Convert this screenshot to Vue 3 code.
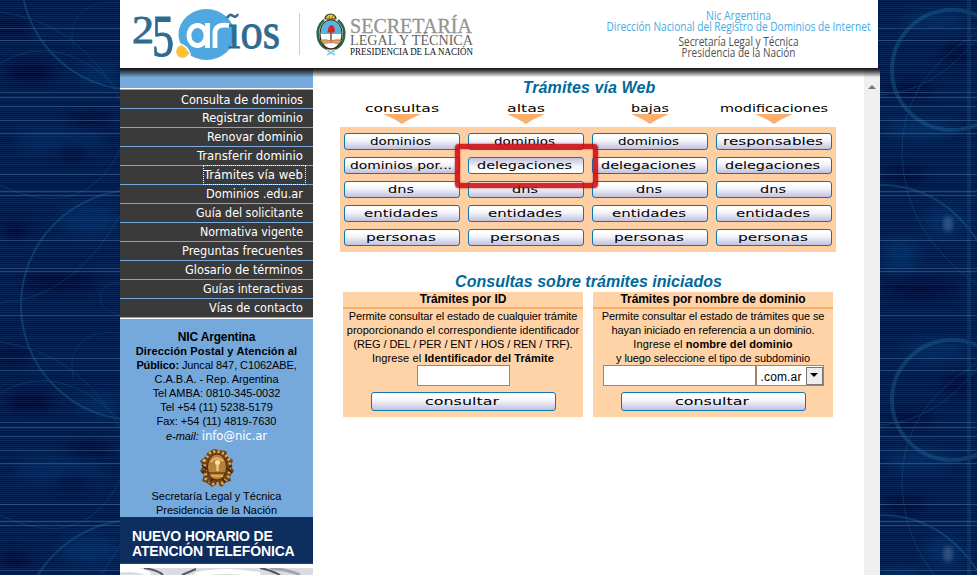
<script setup>
const menu = [
  'Consulta de dominios', 'Registrar dominio', 'Renovar dominio', 'Transferir dominio',
  'Trámites vía web', 'Dominios .edu.ar', 'Guía del solicitante', 'Normativa vigente',
  'Preguntas frecuentes', 'Glosario de términos', 'Guías interactivas', 'Vías de contacto',
]
const menuWidths = [122, 101, 96, 106, 99, 97, 107, 103, 121, 118, 100, 94]

// Label widths of the extended display lettering, in pixels
const widths = {
  consultas: 74, altas: 38, bajas: 38, modificaciones: 108, dominios: 61,
  'dominios por...': 102, dns: 26, entidades: 74, personas: 70,
  delegaciones: 95, responsables: 100, consultar: 74,
}
const columns = [
  { name: 'consultas', items: ['dominios', 'dominios por...', 'dns', 'entidades', 'personas'] },
  { name: 'altas', items: ['dominios', 'delegaciones', 'dns', 'entidades', 'personas'] },
  { name: 'bajas', items: ['dominios', 'delegaciones', 'dns', 'entidades', 'personas'] },
  { name: 'modificaciones', items: ['responsables', 'delegaciones', 'dns', 'entidades', 'personas'] },
]
const lines = []
for (let y = 0; y < 330; y += 2) {
  lines.push({ y, o: 0.1 + ((y * 37) % 23) / 130 })
}
const brightLines = [28, 40, 92, 97, 106, 120, 133, 174, 191, 195, 240, 268, 271, 315]
</script>

<template>
  <div class="page">
    <svg class="backdrop" width="977" height="575">
      <defs>
        <filter id="soft"><feGaussianBlur stdDeviation="7" /></filter>
        <filter id="haze"><feGaussianBlur stdDeviation="2" /></filter>
        <pattern id="tile" width="977" height="330" patternUnits="userSpaceOnUse">
          <rect width="977" height="330" fill="#001848" />
          <g filter="url(#soft)" fill="#000628" opacity=".8">
            <ellipse cx="30" cy="72" rx="26" ry="10" /><ellipse cx="12" cy="28" rx="20" ry="8" />
            <ellipse cx="72" cy="150" rx="16" ry="9" /><ellipse cx="15" cy="230" rx="14" ry="9" />
            <ellipse cx="90" cy="120" rx="25" ry="7" /><ellipse cx="60" cy="282" rx="40" ry="8" />
            <ellipse cx="958" cy="54" rx="16" ry="9" /><ellipse cx="910" cy="90" rx="25" ry="7" />
            <ellipse cx="905" cy="175" rx="22" ry="7" /><ellipse cx="920" cy="290" rx="40" ry="8" />
          </g>
          <g filter="url(#soft)" fill="#033a78" opacity=".5">
            <ellipse cx="60" cy="140" rx="45" ry="8" /><ellipse cx="90" cy="220" rx="30" ry="14" />
            <ellipse cx="100" cy="75" rx="20" ry="8" /><ellipse cx="920" cy="130" rx="35" ry="9" />
            <ellipse cx="945" cy="222" rx="20" ry="14" /><ellipse cx="900" cy="255" rx="18" ry="16" />
            <ellipse cx="935" cy="20" rx="30" ry="8" />
          </g>
          <rect v-for="l in lines" :key="l.y" x="0" :y="l.y" width="977" height="1" fill="#2c5f98" :opacity="l.o" />
          <rect v-for="y in brightLines" :key="'b' + y" x="0" :y="y" width="977" height="1" fill="#5f86b4" opacity=".4" />
          <g fill="none" stroke="#1c6c94" opacity=".38">
            <circle cx="136" cy="305" r="115" stroke-width="2" />
            <circle cx="136" cy="-25" r="115" stroke-width="2" />
            <path d="M0 12Q80 22 122 102M0 63Q60 28 122 92M0 185Q85 225 122 146M0 303Q75 298 122 212" opacity=".7" />
            <path d="M120 3C85 -2 65 20 74 50M122 282Q100 283 100 298Q101 312 122 315" opacity=".5" />
            <circle cx="952" cy="70" r="60" stroke-width="4" />
            <path d="M977 33Q900 80 902 155Q905 235 977 284M880 95Q935 92 977 38" opacity=".8" />
            <path d="M880 185Q940 185 977 240" stroke-width="2" />
            <path d="M969 0V330" stroke-width="4" opacity=".6" />
          </g>
          <ellipse cx="948" cy="224" rx="5" ry="8" fill="#8291ae" opacity=".35" filter="url(#haze)" />
        </pattern>
      </defs>
      <rect width="977" height="575" fill="url(#tile)" />
    </svg>

    <div class="site">
      <header class="header">
        <svg class="brand" width="370" height="68" viewBox="120 0 370 68">
          <g class="serif" fill="#2f6b90" stroke="#2f6b90" stroke-width=".9">
            <text x="132" y="43" font-size="40" textLength="22" lengthAdjust="spacingAndGlyphs">2</text>
            <text x="152" y="56" font-size="59" textLength="22" lengthAdjust="spacingAndGlyphs">5</text>
            <ellipse cx="206.500" cy="34.500" rx="28" ry="25.500" fill="#4fa8df" stroke="none" />
            <text x="228" y="48" font-size="51" textLength="52" lengthAdjust="spacingAndGlyphs">ıos</text>
            <path d="M227 18Q230 13 233 16Q236 18 238 14" fill="none" stroke-width="2.500" />
          </g>
          <g fill="none" stroke="#fff" stroke-width="4.800">
            <ellipse cx="197.500" cy="35.500" rx="8.500" ry="10" />
            <path d="M207.500 23V48M215 48V32Q216 23.500 229 25.500" />
          </g>
          <circle cx="182.500" cy="51.500" r="6.300" fill="#fdc131" />
          <path d="M179 43.500Q188 46 190.500 55" fill="none" stroke="#fff" stroke-width="1.400" />
          <path d="M299.500 13V55" stroke="#ccc" />
          <g>
            <path d="M324 20Q316 27 318 37Q319 45 327 49M338 20Q346 27 344 37Q343 45 335 49" fill="none" stroke="#25684a" stroke-width="2.500" />
            <path d="M325 19a5.500 5 0 0 1 11 0z" fill="#f0c238" stroke="#3b3520" stroke-width="1.200" />
            <path d="M329 17h1M332 17h1" stroke="#5b4416" />
            <ellipse cx="331" cy="34.500" rx="11" ry="14.500" fill="#fff" stroke="#3c2a16" stroke-width="1.300" />
            <path d="M320.700 34Q321 21 331 20.500Q341 21 341.300 34Z" fill="#55b5df" />
            <path d="M331 31V43" stroke="#86502c" stroke-width="1.500" />
            <path d="M327.500 32.500Q328 25 332 25Q336 28 334.500 32.500Z" fill="#d8232d" />
            <path d="M320.500 40Q327 39 331 41Q335 39 341.500 40L339 44Q331 41 323 44Z" fill="#dfa065" stroke="#82512e" stroke-width=".5" />
            <path d="M327 50L335 55M335 50L327 55" stroke="#8bcbe9" stroke-width="2" />
          </g>
          <g class="serif">
            <text x="350" y="33" font-size="20.500" fill="#949494" stroke="#949494" stroke-width=".3" textLength="122" lengthAdjust="spacingAndGlyphs">SECRETARÍA</text>
            <text x="350" y="45" font-size="15.500" fill="#636363" textLength="123" lengthAdjust="spacingAndGlyphs">LEGAL Y TÉCNICA</text>
            <text x="350" y="54.500" font-size="10.500" fill="#111" textLength="123" lengthAdjust="spacingAndGlyphs">PRESIDENCIA DE LA NACIÓN</text>
          </g>
        </svg>
        <svg class="dept" width="280" height="68" viewBox="598 0 280 68">
          <g fill="#49aae3">
            <text x="706" y="20" textLength="65" lengthAdjust="spacingAndGlyphs">Nic Argentina</text>
            <text x="606.500" y="31" textLength="264" lengthAdjust="spacingAndGlyphs">Dirección Nacional del Registro de Dominios de Internet</text>
          </g>
          <g fill="#505050">
            <text x="678.500" y="46" textLength="120" lengthAdjust="spacingAndGlyphs">Secretaría Legal y Técnica</text>
            <text x="681.500" y="57" textLength="114" lengthAdjust="spacingAndGlyphs">Presidencia de la Nación</text>
          </g>
        </svg>
      </header>

      <div class="body">
        <aside class="side">
          <nav class="menu">
            <a v-for="(m, i) in menu" :key="m" class="entry">
              <svg :width="menuWidths[i] + 2" height="18" :class="{ focused: i === 4 }">
                <text x="0" :y="i ? 13 : 14" :textLength="menuWidths[i]" lengthAdjust="spacingAndGlyphs">{{ m }}</text>
              </svg>
            </a>
          </nav>
          <div class="contact">
            <b class="lead">NIC Argentina</b>
            <b class="wide">Dirección Postal y Atención al</b>
            <span class="narrow"><b>Público:</b> Juncal 847, C1062ABE,</span>
            <span>C.A.B.A. - Rep. Argentina</span>
            <span>Tel AMBA: 0810-345-0032</span>
            <span>Tel +54 (11) 5238-5179</span>
            <span>Fax: +54 (11) 4819-7630</span>
            <span class="mail"><i>e-mail:</i> <a>info@nic.ar</a></span>
            <svg class="crest" width="36" height="40" viewBox="0 0 36 40">
              <path d="M9 4L15 1L20 2L27 3L29 9L34 12L32 18L35 23L31 28L32 33L27 34L23 39L18 36L13 39L8 35L3 33L5 27L1 23L4 18L1 13L6 9Z" fill="#714315" />
              <path d="M5 13L11 5L17 3L26 6L31 13L30 28L24 35L14 36L7 31Z" fill="none" stroke="#dbb066" stroke-width="3" stroke-dasharray="2 2.500" />
              <path d="M3 17l4 4-4 4M33 17l-4 4 4 4M10 34l4-3M27 34l-4-3" stroke="#3a2010" stroke-width="1.500" fill="none" />
              <ellipse cx="18" cy="19" rx="9.500" ry="13" fill="#b98135" stroke="#4c2a10" stroke-width="1" />
              <path d="M12 14Q17 7 24 13" stroke="#e3b567" stroke-width="2" fill="none" />
              <circle cx="18.500" cy="14.500" r="2.500" fill="#f9e3a4" /><path d="M17.500 17h2v6h-2z" fill="#f5d88b" />
              <path d="M10 25h16" stroke="#6e431b" stroke-width="1.500" />
              <path d="M12 28h12" stroke="#dca858" stroke-width="2" />
            </svg>
            <span>Secretaría Legal y Técnica</span>
            <span>Presidencia de la Nación</span>
          </div>
          <div class="notice"><span>NUEVO HORARIO DE</span><span>ATENCIÓN TELEFÓNICA</span></div>
          <svg class="photo" width="193" height="7">
            <rect width="193" height="7" fill="#d9dce0" />
            <path d="M0 2Q20 0 30 7M75 7Q105 0 140 7" stroke="#fff" stroke-width="5" fill="none" />
            <path d="M24 0Q38 2 43 7M62 7L76 1M140 0Q151 2 160 7" stroke="#55585e" stroke-width="2" fill="none" />
            <path d="M150 0Q170 2 180 7" stroke="#a1a6ad" stroke-width="3" fill="none" />
          </svg>
        </aside>

        <main class="main">
          <h1 class="title t1">Trámites vía Web</h1>
          <div class="heads">
            <div v-for="c in columns" :key="c.name" class="head">
              <svg class="label" :width="widths[c.name]" height="14">
                <text x="0" y="10" :textLength="widths[c.name]" lengthAdjust="spacingAndGlyphs">{{ c.name }}</text>
              </svg>
              <svg width="38" height="10"><path d="M0 0H38Q28 4 19 10Q10 4 0 0Z" fill="#ffad6b" /></svg>
            </div>
          </div>
          <div class="panel">
            <div v-for="c in columns" :key="c.name" class="col">
              <button v-for="(t, i) in c.items" :key="t" class="btn" :class="{ pressed: c.name === 'altas' && i === 1 }">
                <svg class="label" :width="widths[t]" height="15">
                  <text x="0" y="11" :textLength="widths[t]" lengthAdjust="spacingAndGlyphs">{{ t }}</text>
                </svg>
              </button>
            </div>
            <div class="highlight"></div>
          </div>

          <h1 class="title t2">Consultas sobre trámites iniciados</h1>
          <div class="forms">
            <section class="form">
              <h2>Trámites por ID</h2>
              <p class="tight">Permite consultar el estado de cualquier trámite</p>
              <p>proporcionando el correspondiente identificador</p>
              <p class="tight">(REG / DEL / PER / ENT / HOS / REN / TRF).</p>
              <p class="loose">Ingrese el <b>Identificador del Trámite</b></p>
              <div class="fields"><input class="short" /></div>
              <button class="btn big">
                <svg class="label" width="74" height="15"><text x="0" y="10.500" textLength="74" lengthAdjust="spacingAndGlyphs">consultar</text></svg>
              </button>
            </section>
            <section class="form">
              <h2>Trámites por nombre de dominio</h2>
              <p class="tight">Permite consultar el estado de trámites que se</p>
              <p class="tight">hayan iniciado en referencia a un dominio.</p>
              <p class="loose">Ingrese el <b>nombre del dominio</b></p>
              <p class="tight">y luego seleccione el tipo de subdominio</p>
              <div class="fields">
                <input class="long" />
                <div class="select"><span>.com.ar</span><i><svg width="8" height="5"><path d="M0 0H8L4 4Z" /></svg></i></div>
              </div>
              <button class="btn big">
                <svg class="label" width="74" height="15"><text x="0" y="10.500" textLength="74" lengthAdjust="spacingAndGlyphs">consultar</text></svg>
              </button>
            </section>
          </div>
        </main>
        <div class="scroll"><svg width="8" height="5"><path d="M0 4L4 0L8 4Z" fill="#777" /></svg></div>
        <div class="shade"></div>
      </div>
    </div>
  </div>
</template>

<style>
body { margin: 0; overflow: hidden; background: #001a4c; }
</style>

<style scoped>
.page { position: relative; width: 977px; height: 575px; overflow: hidden; font-family: "Liberation Sans", Arial, sans-serif; color: #000; }
.page * { box-sizing: border-box; }
svg { display: block; flex: none; }
.backdrop { position: absolute; left: 0; top: 0; }
.site { position: relative; width: 760px; height: 575px; margin-left: 120px; }
.header { display: flex; justify-content: space-between; width: 758px; height: 68px; background: #fff; }
.serif { font-family: "Liberation Serif", serif; }
.dept { font: 12px "Open Sans", sans-serif; }
.dept text { stroke-width: .15; }
.body { position: relative; display: flex; height: 507px; background: #fff; }
.shade { position: absolute; left: 0; top: 0; width: 760px; height: 9px; background: linear-gradient(rgba(20,20,20,1), rgba(20,20,20,.85) 25%, rgba(30,30,30,.5) 60%, rgba(60,60,60,.05)); }
.side { width: 193px; height: 507px; overflow: hidden; background: #75a9dc; }
.menu { margin-top: 20px; border-top: 1px solid #fff; border-bottom: 1px solid #fff; padding-top: 1px; }
.entry { display: flex; justify-content: flex-end; height: 19px; padding-right: 8px; background: #3a3a3a; border-bottom: 1px solid #75a9dc; font: 13px "DejaVu Sans Condensed", "DejaVu Sans", sans-serif; fill: #fff; }
.entry text { font-stretch: condensed; }
.entry svg { overflow: visible; }
.focused { outline: 1px dotted #fff; outline-offset: 0; }
.contact { display: flex; flex-direction: column; align-items: center; height: 198px; padding-top: 11px; font-size: 11px; line-height: 14px; white-space: nowrap; }
.contact span { letter-spacing: -.03px; }
.contact .wide { letter-spacing: .14px; }
.contact .narrow { letter-spacing: -.1px; }
.lead { font-size: 12px; letter-spacing: -.15px; }
.mail { height: 18px; line-height: 16px; }
.mail a { font: 13px/16px "DejaVu Sans Condensed", sans-serif; color: #fff; letter-spacing: -.1px; }
.crest { margin: 2px 0 1px; }
.notice { display: flex; flex-direction: column; height: 47px; padding: 12px 0 0 12px; background: #0e2e5f; border-bottom: 1px solid #5c2d5e; color: #fff; font-weight: bold; font-size: 14px; line-height: 15px; white-space: nowrap; letter-spacing: -.15px; }
.photo { border-top: 4px solid #fff; height: 11px; width: 193px; }
.main { width: 551px; padding-left: 27px; }
.title { margin: 0; width: 496px; color: #00689b; font: italic bold 16px/20px "Liberation Sans", Arial, sans-serif; text-align: center; }
.t1 { margin-top: 10px; padding-left: 2px; letter-spacing: .1px; }
.heads { display: grid; grid-template-columns: repeat(4, 124px); height: 29px; padding-top: 3px; }
.head { display: flex; flex-direction: column; align-items: center; }
.head .label { height: 13px; }
.label { overflow: visible; font: 11px "DejaVu Sans", sans-serif; fill: #000; }
.head .label text { transform: translateY(.5px); }
.panel { position: relative; display: flex; gap: 8px; width: 496px; height: 125px; padding: 6px 4px; background: #fdcfa2; }
.col { display: flex; flex-direction: column; gap: 7px; width: 116px; }
.btn { display: flex; justify-content: center; align-items: flex-start; width: 116px; height: 17px; padding: 0 3px 0 0; border: 1px solid #0b79b5; border-radius: 3px; background: linear-gradient(#fff 15%, #f3f3fa 45%, #c2c1dc); }
.btn.pressed { background: linear-gradient(#c2c1dc, #f3f3fa 55%, #fff 85%); }
.highlight { position: absolute; left: 115px; top: 17px; width: 143px; height: 44px; border: 5px solid rgba(205,10,14,.87); border-radius: 4px; box-shadow: 0 0 2px rgba(200,0,0,.8), inset 0 0 2px rgba(200,0,0,.8); }
.t2 { margin-top: 20px; padding-left: 1px; letter-spacing: .03px; }
.forms { display: flex; gap: 10px; padding-left: 3px; }
.form { display: flex; flex-direction: column; align-items: center; width: 240px; height: 125px; background: #ffd3a8; white-space: nowrap; }
.form h2 { width: 100%; height: 17px; margin: 0; border-bottom: 2px solid #ffad62; font-size: 12px; line-height: 15px; text-align: center; letter-spacing: -.05px; }
.form p { margin: 0; font-size: 11px; line-height: 14px; }
.form .tight { letter-spacing: -.09px; }
.form .loose { letter-spacing: .1px; }
.fields { display: flex; height: 21px; }
input { height: 21px; margin: 0; padding: 0; border: 1px solid #ac8067; border-radius: 0; background: #fff; }
.short { width: 93px; }
.long { width: 153px; }
.select { display: flex; align-items: center; width: 68px; border: 1px solid #ac8067; background: #fff; font-size: 12px; }
.select span { width: 49px; padding: 2px 0 0 4px; letter-spacing: .15px; }
.select i { display: flex; align-items: center; justify-content: center; width: 17px; height: 18px; border: 1px solid #777; background: #eee; }
.big { width: 185px; height: 19px; margin-top: 6px; padding-top: 1px; }
.scroll { display: flex; justify-content: center; width: 16px; padding-top: 17px; background: #efefef; }
</style>
